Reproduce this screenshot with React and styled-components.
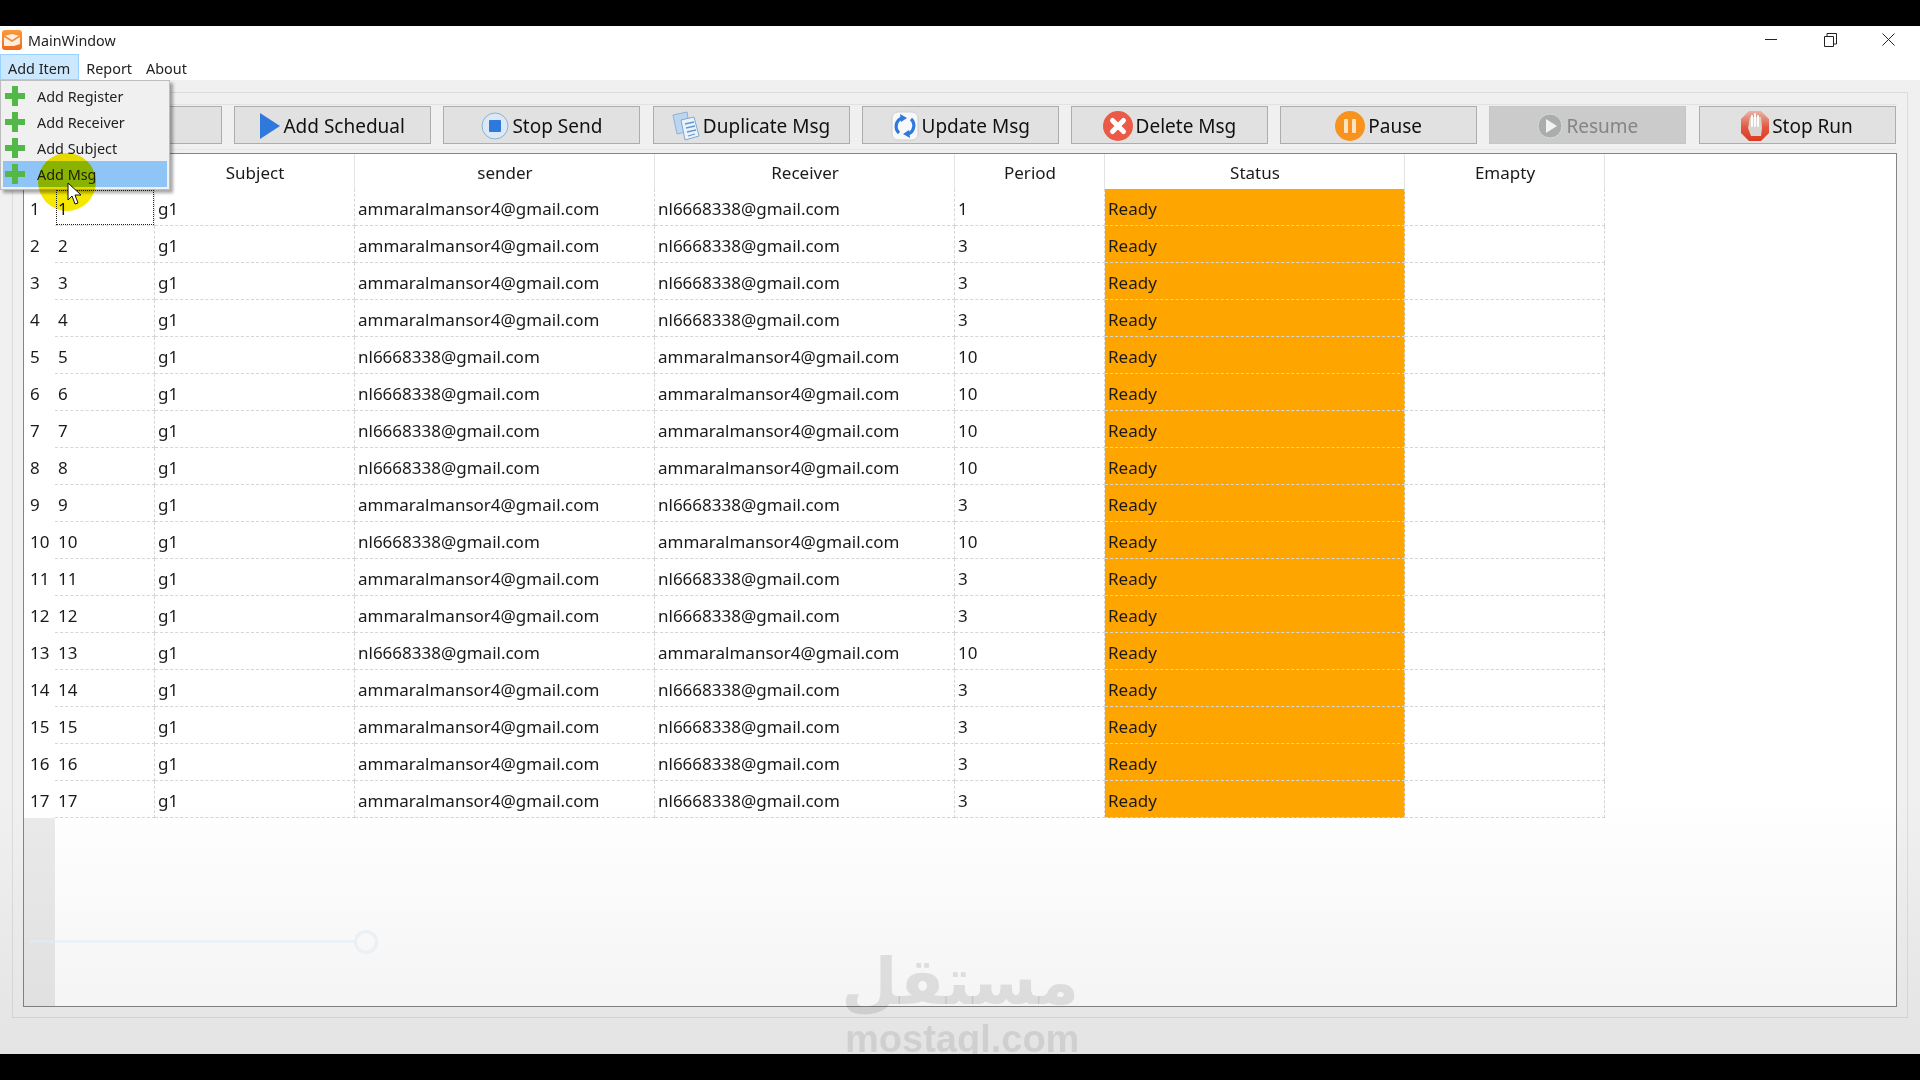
import React from "react";
import styled, { createGlobalStyle } from "styled-components";

const FONT = `"Noto Sans", "Open Sans", "Liberation Sans", sans-serif`;

const Global = createGlobalStyle`
  html, body { margin: 0; padding: 0; background: #000; }
  body { font-family: ${FONT}; overflow: hidden; }
`;

const Screen = styled.div`
  width: 1920px;
  height: 1080px;
  background: #000;
  padding: 26px 0;
  box-sizing: border-box;
`;

const Window = styled.div`
  position: relative;
  height: 1028px;
  background: #fff;
  display: flex;
  flex-direction: column;
`;

const TitleBar = styled.div`
  height: 28px;
  display: flex;
  align-items: center;
  padding: 0 22px 0 2px;
  font-size: 14.3px;
  color: #222;
  svg { display: block; }
`;

const TitleText = styled.span`
  margin-left: 6px;
  flex: 1;
`;

const WinControls = styled.div`
  display: flex;
  gap: 41px;
  align-items: center;
`;

const MenuBar = styled.div`
  height: 26px;
  display: flex;
  font-size: 14.4px;
  color: #222;
`;

const MenuItem = styled.div`
  height: 26px;
  padding: 0 ${(p) => (p.$open ? "8px" : "1px")} 0 ${(p) => (p.$open ? "7px" : "6px")};
  box-sizing: border-box;
  line-height: 28px;
  background: ${(p) => (p.$open ? "#cce8ff" : "transparent")};
  border: 1px solid ${(p) => (p.$open ? "#99d1ff" : "transparent")};
  margin-right: ${(p) => (p.$open ? "0" : "5px")};
`;

const Panel = styled.div`
  flex: 1;
  background: #f0f0f0;
  padding: 12px 12px 0;
  display: flex;
  flex-direction: column;
`;

const Frame = styled.div`
  height: 926px;
  box-sizing: border-box;
  border: 1px solid #dcdcdc;
  padding: 11px 10px 10px;
  display: flex;
  flex-direction: column;
`;

const Toolbar = styled.div`
  border-top: 1px solid #e2e2e2;
  border-bottom: 1px solid #e6e6e6;
  display: flex;
  gap: 12.2px;
  padding: 1px 0 5px 2px;
  margin-bottom: 3px;
`;

const ToolButton = styled.div`
  width: 197px;
  height: 38px;
  box-sizing: border-box;
  padding-top: 1px;
  display: flex;
  align-items: center;
  justify-content: center;
  gap: 3px;
  font-size: 19px;
  color: ${(p) => (p.$off ? "#858585" : "#111")};
  background: ${(p) => (p.$off ? "#cbcbcb" : "#e1e1e1")};
  border: 1px solid ${(p) => (p.$off ? "#c6c6c6" : "#adadad")};
  svg { flex: none; }
`;

const TableFrame = styled.div`
  flex: 1;
  border: 1px solid #858585;
  background: linear-gradient(to right, #eaeaea 31px, #fff 31px);
  overflow: hidden;
`;

const Grid = styled.table`
  border-collapse: separate;
  border-spacing: 0;
  table-layout: fixed;
  width: 1581px;
  font-size: 17px;
  color: #1a1a1a;
`;

const HeadCell = styled.th`
  height: 35px;
  padding: 1px 0 0 1px;
  font-weight: 400;
  text-align: center;
  background: #fff;
  border-right: 1px solid #e4e4e4;
  box-sizing: border-box;
`;

const RowHead = styled.td`
  height: 37px;
  padding: 1px 0 0 6px;
  background: #fff;
  box-sizing: border-box;
`;

const Cell = styled.td`
  height: 37px;
  padding: 2px 0 0 3px;
  box-sizing: border-box;
  background: ${(p) => (p.$status ? "#ffa500" : "#fff")};
  border-right: 1px dashed #d6d6d6;
  border-bottom: 1px dashed #d6d6d6;
  outline: ${(p) => (p.$focus ? "1px dotted #222" : "none")};
  outline-offset: -2px;
  white-space: nowrap;
`;

const DropMenu = styled.div`
  position: absolute;
  left: 0;
  top: 54px;
  width: 170px;
  height: 110px;
  box-sizing: border-box;
  padding: 2px;
  background: #f0f0f0;
  border: 1px solid #bdbdbd;
  box-shadow: 3px 3px 3px rgba(0, 0, 0, 0.35);
  font-size: 14.4px;
  color: #222;
`;

const DropItem = styled.div`
  height: 26px;
  display: flex;
  align-items: center;
  gap: 12px;
  padding-left: 2px;
  background: ${(p) => (p.$active ? "#8fc5f6" : "transparent")};
`;

const Spotlight = styled.div`
  position: absolute;
  left: 38px;
  top: 127px;
  width: 58px;
  height: 58px;
  border-radius: 50%;
  background: #f5e800;
  mix-blend-mode: multiply;
`;

const Pointer = styled.svg`
  position: absolute;
  left: 67px;
  top: 156px;
`;

const Fade = styled.div`
  position: absolute;
  left: 0;
  right: 0;
  top: 770px;
  bottom: 0;
  pointer-events: none;
  background: linear-gradient(to bottom, rgba(0, 0, 0, 0), rgba(0, 0, 0, 0.05));
`;

const SliderLine = styled.div`
  position: absolute;
  left: 30px;
  top: 914px;
  width: 325px;
  height: 3px;
  background: rgba(228, 236, 245, 0.55);
`;

const SliderKnob = styled.div`
  position: absolute;
  left: 354px;
  top: 904px;
  width: 24px;
  height: 24px;
  box-sizing: border-box;
  border-radius: 50%;
  border: 3px solid rgba(228, 236, 245, 0.7);
`;

const MarkArabic = styled.div`
  position: absolute;
  left: 849px;
  top: 916px;
  width: 230px;
  text-align: center;
  font-family: "DejaVu Sans", sans-serif;
  font-weight: 700;
  font-size: 65px;
  line-height: 80px;
  white-space: nowrap;
  color: rgba(0, 0, 0, 0.1);
  pointer-events: none;
`;

const MarkLatin = styled.div`
  position: absolute;
  left: 845px;
  top: 996px;
  width: 230px;
  text-align: center;
  font-family: "Liberation Sans", sans-serif;
  font-weight: 700;
  font-size: 38px;
  line-height: 34px;
  color: rgba(0, 0, 0, 0.09);
  pointer-events: none;
`;

const PlusIcon = () => (
  <svg width="20" height="20" viewBox="0 0 20 20">
    <path d="M7 0h6v7h7v6h-7v7H7v-7H0V7h7z" fill="#54b848" />
  </svg>
);

const AppIcon = () => (
  <svg width="20" height="20" viewBox="0 0 20 20">
    <defs>
      <linearGradient id="appIcon" x1="0" y1="0" x2="0" y2="1">
        <stop offset="0" stopColor="#fb9a3c" />
        <stop offset="1" stopColor="#ee6a1c" />
      </linearGradient>
    </defs>
    <rect width="20" height="20" rx="3" fill="url(#appIcon)" />
    <path d="M2 6l8-2 8 2v8l-6 2H2z" fill="#fdeedd" />
    <path d="M2 6l8 5 8-5" fill="none" stroke="#f28a3a" strokeWidth="1.5" />
  </svg>
);

const iconSize = { width: 28, height: 30, viewBox: "0 0 28 30" };

const icons = {
  play: (
    <svg width="20" height="26" viewBox="0 0 20 26">
      <path d="M0 0l20 13L0 26z" fill="#2f78dc" />
    </svg>
  ),
  stop: (
    <svg {...iconSize}>
      <circle cx="14" cy="15" r="13" fill="#dbe8f6" stroke="#8fb0d0" />
      <rect x="8" y="9" width="12" height="12" rx="1" fill="#2f78dc" />
    </svg>
  ),
  duplicate: (
    <svg {...iconSize}>
      <path d="M1 4l14-3 3 19-13 3z" fill="#bcd6ef" stroke="#8db2d6" />
      <path d="M9 9l13-3 5 19-14 4z" fill="#eaf3fb" stroke="#7fa9d0" />
      <path d="M13 13l9-2M14 17l9-2M15 21l9-2M16 25l7-2" stroke="#5f9ad4" strokeWidth="1.3" />
    </svg>
  ),
  update: (
    <svg {...iconSize}>
      <rect x="1" y="1" width="26" height="28" rx="6" fill="#f8f8f8" stroke="#cfcfcf" />
      <path d="M8 22a9 9 0 0 1 3-15M20 8a9 9 0 0 1-3 15" fill="none" stroke="#2f78dc" strokeWidth="3.2" />
      <path d="M9 3l7 4-6 4zM19 27l-7-4 6-4z" fill="#2f78dc" />
    </svg>
  ),
  remove: (
    <svg width="30" height="30" viewBox="0 0 30 30">
      <circle cx="15" cy="15" r="15" fill="#ea5a47" />
      <path d="M9.5 9.5l11 11M20.5 9.5l-11 11" stroke="#fff" strokeWidth="5" strokeLinecap="round" />
    </svg>
  ),
  pause: (
    <svg width="30" height="30" viewBox="0 0 30 30">
      <circle cx="15" cy="15" r="15" fill="#f7931e" />
      <rect x="9" y="8" width="4" height="14" rx="1" fill="#fde3c0" />
      <rect x="17" y="8" width="4" height="14" rx="1" fill="#fde3c0" />
    </svg>
  ),
  resume: (
    <svg width="26" height="26" viewBox="0 0 26 26">
      <circle cx="13" cy="13" r="12" fill="#a9adad" stroke="#d8d8d8" />
      <path d="M9 6l11 7-11 7z" fill="#f2f2f2" />
    </svg>
  ),
  hand: (
    <svg width="28" height="30" viewBox="0 0 28 30">
      <defs>
        <linearGradient id="handBg" x1="0" y1="0" x2="0" y2="1">
          <stop offset="0" stopColor="#e9b3a4" />
          <stop offset="0.55" stopColor="#e2563e" />
          <stop offset="1" stopColor="#dc3a22" />
        </linearGradient>
      </defs>
      <path d="M8 0h12l8 8v14l-8 8H8l-8-8V8z" fill="url(#handBg)" />
      <path d="M7 17l2-11h11l1 11-1 8H10z" fill="#d9d4d0" />
      <path d="M11 5v10M14 3v12M17 5v10" stroke="#fff" strokeWidth="2" strokeLinecap="round" />
    </svg>
  ),
};

const buttons = [
  { label: "" },
  { label: "Add Schedual", icon: "play" },
  { label: "Stop Send", icon: "stop" },
  { label: "Duplicate Msg", icon: "duplicate" },
  { label: "Update Msg", icon: "update" },
  { label: "Delete Msg", icon: "remove" },
  { label: "Pause", icon: "pause" },
  { label: "Resume", icon: "resume", off: true },
  { label: "Stop Run", icon: "hand" },
];

const columns = [
  { title: "", width: 31 },
  { title: "", width: 100 },
  { title: "Subject", width: 200 },
  { title: "sender", width: 300 },
  { title: "Receiver", width: 300 },
  { title: "Period", width: 150 },
  { title: "Status", width: 300 },
  { title: "Emapty", width: 200 },
];

const A = "ammaralmansor4@gmail.com";
const N = "nl6668338@gmail.com";
const rows = Array.from({ length: 17 }, (_, i) => {
  const id = i + 1;
  const flipped = [5, 6, 7, 8, 10, 13].includes(id);
  return {
    id,
    sender: flipped ? N : A,
    receiver: flipped ? A : N,
    period: id === 1 ? 1 : flipped ? 10 : 3,
  };
});

export default function App() {
  return (
    <Screen>
      <Global />
      <Window>
        <TitleBar>
          <AppIcon />
          <TitleText>MainWindow</TitleText>
          <WinControls>
            <svg width="18" height="14" viewBox="0 0 18 14">
              <path d="M3 6.5h12" stroke="#222" />
            </svg>
            <svg width="18" height="14" viewBox="0 0 18 14">
              <path d="M3.5 3.5h9v10h-9zM6 3V.5h9.5V11H13" fill="none" stroke="#222" />
            </svg>
            <svg width="18" height="14" viewBox="0 0 18 14">
              <path d="M2.5 0.5l12 12M14.5 0.5l-12 12" stroke="#222" />
            </svg>
          </WinControls>
        </TitleBar>
        <MenuBar>
          <MenuItem $open>Add Item</MenuItem>
          <MenuItem>Report</MenuItem>
          <MenuItem>About</MenuItem>
        </MenuBar>
        <Panel>
          <Frame>
            <Toolbar>
              {buttons.map((b, i) => (
                <ToolButton key={i} $off={b.off}>
                  {b.icon && icons[b.icon]}
                  {b.label}
                </ToolButton>
              ))}
            </Toolbar>
            <TableFrame>
              <Grid>
                <colgroup>
                  {columns.map((c, i) => (
                    <col key={i} style={{ width: c.width }} />
                  ))}
                </colgroup>
                <thead>
                  <tr>
                    {columns.map((c, i) => (
                      <HeadCell key={i}>{c.title}</HeadCell>
                    ))}
                  </tr>
                </thead>
                <tbody>
                  {rows.map((r) => (
                    <tr key={r.id}>
                      <RowHead>{r.id}</RowHead>
                      <Cell $focus={r.id === 1}>{r.id}</Cell>
                      <Cell>g1</Cell>
                      <Cell>{r.sender}</Cell>
                      <Cell>{r.receiver}</Cell>
                      <Cell>{r.period}</Cell>
                      <Cell $status>Ready</Cell>
                      <Cell />
                    </tr>
                  ))}
                </tbody>
              </Grid>
            </TableFrame>
          </Frame>
        </Panel>
        <Fade />
        <SliderLine />
        <SliderKnob />
        <MarkArabic dir="rtl">مستقل</MarkArabic>
        <MarkLatin>mostaql.com</MarkLatin>
        <DropMenu>
          {["Add Register", "Add Receiver", "Add Subject", "Add Msg"].map((t, i) => (
            <DropItem key={t} $active={i === 3}>
              <PlusIcon />
              <span>{t}</span>
            </DropItem>
          ))}
        </DropMenu>
        <Spotlight />
        <Pointer width="16" height="24" viewBox="0 0 16 24">
          <path d="M1 1v17l4-4 3 8 3-1-3-8h6z" fill="#fff" stroke="#111" />
        </Pointer>
      </Window>
    </Screen>
  );
}
